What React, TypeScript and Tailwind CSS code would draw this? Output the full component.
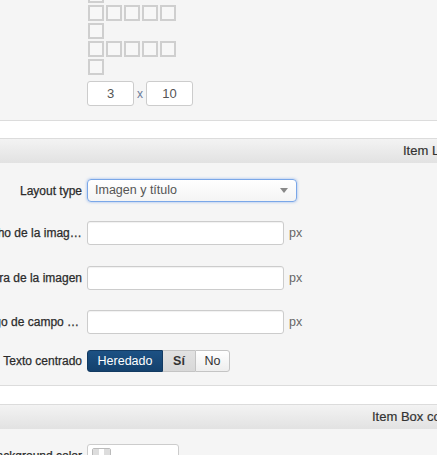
const font = { fontFamily: '"Liberation Sans", Arial, sans-serif' };

// rows of the small layout grid preview, counts per row
const GRID_ROWS = [1, 5, 1, 5, 1];

function Square() {
  return <div className="w-4 h-4 border-2 border-[#cfcfcf] bg-[#f7f7f7]" />;
}

function SectionHeader({ title, offset }: { title: string; offset: string }) {
  return (
    <div className="border-t border-[#dcdcdc] h-[25px] bg-gradient-to-b from-[#f3f3f3] to-[#e2e2e2] flex items-center">
      <span className={`${offset} whitespace-nowrap text-[13px] text-[#333] [-webkit-text-stroke:0.2px_#333]`}>
        {title}
      </span>
    </div>
  );
}

function Label({ children }: { children: string }) {
  return (
    <div className="w-[106px] -ml-[23px] shrink-0 text-right truncate text-[12px] text-[#2b2b2b] pr-[1px] [-webkit-text-stroke:0.25px_#2b2b2b]">
      {children}
    </div>
  );
}

function PxField({ label }: { label: string }) {
  return (
    <div className="flex items-center gap-[4px] h-[24px]">
      <Label>{label}</Label>
      <div className="w-[197px] h-[24px] bg-white border border-[#ccc] rounded-[3px] shadow-[inset_0_1px_1px_rgba(0,0,0,0.06)]" />
      <span className="text-[12.5px] text-[#666] ml-[1px]">px</span>
    </div>
  );
}

export default function App() {
  return (
    <div className="w-[437px] h-[455px] overflow-hidden bg-[#f5f5f5]" style={font}>
      {/* grid preview + rows x cols */}
      <div className="border-b border-[#dcdcdc] pb-[14px]">
        <div className="-mt-[13px] pl-[88px] flex flex-col gap-[2px]">
          {GRID_ROWS.map((n, r) => (
            <div key={r} className="flex gap-[2px]">
              {Array.from({ length: n }).map((_, i) => (
                <Square key={i} />
              ))}
            </div>
          ))}
        </div>
        <div className="mt-[6px] pl-[87px] flex items-center gap-[3px]">
          <div className="w-[47px] h-[25px] bg-white border border-[#ccc] rounded-[3px] flex items-center justify-center text-[13px] text-[#555]">
            3
          </div>
          <span className="text-[12px] text-[#6a7a99]">x</span>
          <div className="w-[47px] h-[25px] bg-white border border-[#ccc] rounded-[3px] flex items-center justify-center text-[13px] text-[#555]">
            10
          </div>
        </div>
      </div>

      <div className="h-[17px] bg-white" />

      <SectionHeader title="Item Layout" offset="ml-[403px]" />
      <div className="border-b border-[#dcdcdc] pt-[16px] pb-[13px] flex flex-col">
        <div className="flex items-center gap-[4px] h-[23px]">
          <Label>Layout type</Label>
          <div className="w-[210px] h-[23px] bg-gradient-to-b from-white to-[#f4f4f4] border border-[#7aa7e8] rounded-[4px] shadow-[0_0_3px_rgba(82,140,230,0.6)] flex items-center pl-[7px] pr-[8px]">
            <span className="flex-1 text-[12.5px] text-[#555]">Imagen y título</span>
            <svg width="8" height="5" viewBox="0 0 8 5" className="text-[#888]">
              <path d="M0 0h8L4 5z" fill="currentColor" />
            </svg>
          </div>
        </div>
        <div className="mt-[19px]">
          <PxField label="Ancho de la imagen principal" />
        </div>
        <div className="mt-[21px]">
          <PxField label="Altura de la imagen" />
        </div>
        <div className="mt-[20px]">
          <PxField label="Largo de campo de descripción" />
        </div>
        <div className="mt-[16px] flex items-center gap-[4px] h-[22px]">
          <Label>Texto centrado</Label>
          <div className="flex h-[22px] text-[12.5px]">
            <div className="w-[76px] flex items-center justify-center rounded-l-[3px] bg-gradient-to-b from-[#1c5184] to-[#14416d] text-white border border-[#123a62]">
              Heredado
            </div>
            <div className="w-[32px] flex items-center justify-center bg-gradient-to-b from-[#e2e2e2] to-[#d8d8d8] text-[#333] font-bold border-y border-[#c4c4c4]">
              Sí
            </div>
            <div className="w-[35px] flex items-center justify-center rounded-r-[3px] bg-gradient-to-b from-white to-[#eee] text-[#333] border border-[#c4c4c4]">
              No
            </div>
          </div>
        </div>
      </div>

      <div className="h-[18px] bg-white" />

      <SectionHeader title="Item Box colors" offset="ml-[372px]" />
      <div className="pt-[15px] flex items-start gap-[4px]">
        <div className="pt-[3px]">
          <Label>Background color</Label>
        </div>
        <div className="w-[92px] h-[24px] bg-white border border-[#ccc] rounded-[3px] flex items-start pt-[3px] pl-[4px] gap-[6px]">
          <div className="w-[19px] h-[13px] rounded-[2px] border border-[#bbb] grid grid-cols-3 grid-rows-2 overflow-hidden">
            <div className="bg-[#ddd]" />
            <div className="bg-white" />
            <div className="bg-[#ddd]" />
            <div className="bg-white" />
            <div className="bg-[#ddd]" />
            <div className="bg-white" />
          </div>
          <span className="mt-[3px] text-[12.5px] text-[#999]">Ilimitado</span>
        </div>
      </div>
    </div>
  );
}
